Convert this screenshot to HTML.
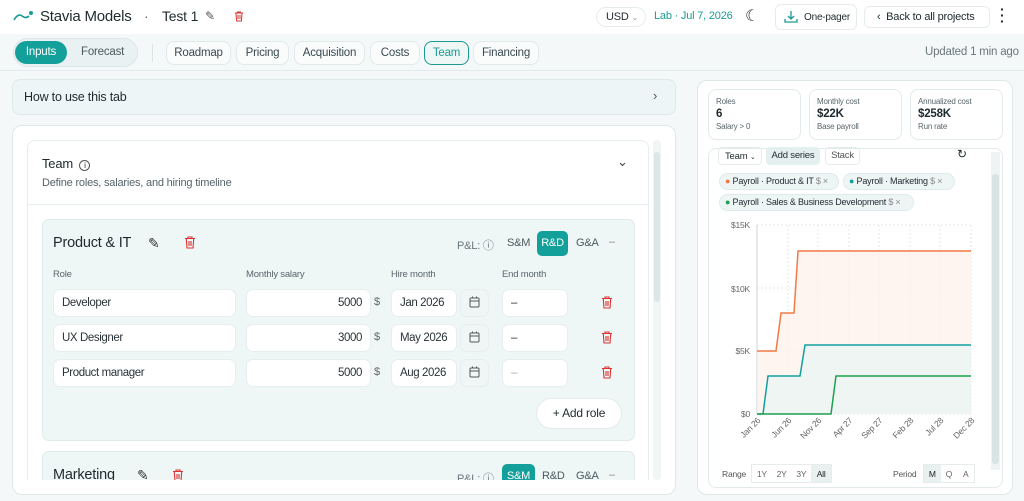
<!DOCTYPE html>
<html><head><meta charset="utf-8"><style>
*{box-sizing:border-box;margin:0;padding:0}
body{width:1024px;height:501px;overflow:hidden;background:#f4f8f8;font-family:"Liberation Sans",sans-serif;color:#1f2a2e;position:relative;font-size:12px;letter-spacing:-0.2px}
.a{position:absolute;white-space:nowrap}
.pill{position:absolute;border:1px solid #e1e9ea;border-radius:8px;background:#fafcfc;font-size:11.5px;color:#3a4a4f;display:flex;align-items:center;justify-content:center}
.inp{position:absolute;background:#fff;border:1px solid #e6eeef;border-radius:7px;height:28px;font-size:11.5px;display:flex;align-items:center;padding:0 8px;color:#2a3338;white-space:nowrap;letter-spacing:-0.4px}
.lbl{position:absolute;font-size:9.5px;color:#5a676b}
.card{position:absolute;background:#fff;border:1px solid #e3eaeb;border-radius:8px}
.tiny{font-size:8px;color:#5a676b}
</style></head><body>
<div class="a" style="left:0;top:0;width:1024px;height:34px;background:#fff"></div>
<svg class="a" style="left:13px;top:10px" width="22" height="12"><path d="M1 10 Q5 3 9 6 T16 6" stroke="#1a9a94" stroke-width="1.6" fill="none"/><circle cx="18" cy="3" r="2" fill="#1a9a94"/></svg>
<div class="a" style="left:40px;top:8px;font-size:15px;font-weight:500">Stavia Models</div>
<div class="a" style="left:144px;top:8px;font-size:14px;color:#666">·</div>
<div class="a" style="left:162px;top:8px;font-size:14px">Test 1</div>
<div class="a" style="left:205px;top:9px;font-size:12px;color:#555">✎</div>
<svg class="a" style="left:234px;top:11px" width="10" height="11"><path d="M1 2h8M3.5 2V1h3v1M2 2.5l.6 7.5h4.8L8 2.5M4 4v4M6 4v4" stroke="#d33" fill="none" stroke-width="1"/></svg>
<div class="a" style="left:596px;top:7px;width:50px;height:20px;border:1px solid #e6ecec;border-radius:10px;font-size:11px;padding:3px 0 0 9px">USD <span style="font-size:8px;color:#999">⌄</span></div>
<div class="a" style="left:654px;top:10px;font-size:11px;color:#1a9a94">Lab · Jul 7, 2026</div>
<div class="a" style="left:745px;top:6px;font-size:16px">☾</div>
<div class="a" style="left:775px;top:4px;width:82px;height:26px;border:1px solid #e6ecec;border-radius:6px;font-size:10px;padding:7px 0 0 28px">One-pager</div>
<svg class="a" style="left:784px;top:10px" width="14" height="14"><path d="M7 1v8M4 6l3 3 3-3M1 9v3h12V9" stroke="#1a9a94" fill="none" stroke-width="1.3"/></svg>
<div class="a" style="left:864px;top:6px;width:126px;height:22px;border:1px solid #e6ecec;border-radius:6px;font-size:11px;padding:4px 0 0 12px">‹ &nbsp;Back to all projects</div>
<div class="a" style="left:1000px;top:6px;font-size:14px;font-weight:bold;line-height:6px">·<br>·<br>·</div>
<div class="a" style="left:0;top:70px;width:1024px;height:1px;background:#e3eaeb"></div>
<div class="a" style="left:13px;top:38px;width:125px;height:29px;border-radius:15px;background:#eaf1f2;border:1px solid #dde7e8"></div>
<div class="a" style="left:15px;top:41px;width:52px;height:23px;border-radius:12px;background:#14a09a;color:#fff;font-size:11.5px;text-align:center;line-height:23px">Inputs</div>
<div class="a" style="left:81px;top:46px;font-size:11.5px;color:#4a5a5e">Forecast</div>
<div class="a" style="left:152px;top:44px;width:1px;height:18px;background:#dde4e5"></div>
<div class="pill" style="left:166px;top:41px;width:65px;height:24px">Roadmap</div>
<div class="pill" style="left:236px;top:41px;width:53px;height:24px">Pricing</div>
<div class="pill" style="left:294px;top:41px;width:71px;height:24px">Acquisition</div>
<div class="pill" style="left:370px;top:41px;width:50px;height:24px">Costs</div>
<div class="pill" style="left:424px;top:41px;width:45px;height:24px;border-color:#1a9a94;color:#1a9a94;background:#eef7f6">Team</div>
<div class="pill" style="left:473px;top:41px;width:66px;height:24px">Financing</div>
<div class="a" style="left:925px;top:46px;font-size:11.5px;color:#6a777b">Updated 1 min ago</div>
<div class="a" style="left:12px;top:79px;width:664px;height:36px;border:1px solid #dfe8e9;border-radius:8px;background:#eef5f6;font-size:12.5px;padding:10px 0 0 11px">How to use this tab</div>
<div class="a" style="left:653px;top:88px;font-size:13px;color:#555">›</div>
<div class="a" style="left:12px;top:125px;width:664px;height:370px;border:1px solid #dfe8e9;border-radius:10px;background:#fff;overflow:hidden">
 <div class="a" style="left:14px;top:14px;width:622px;height:360px;border:1px solid #e6eded;border-radius:8px"></div>
 <div class="a" style="left:29px;top:30px;font-size:13px;font-weight:500">Team <span style="border:1px solid #555;border-radius:50%;display:inline-block;width:11px;height:11px;font-size:8px;text-align:center;line-height:10px;margin-left:3px">i</span></div>
 <div class="a" style="left:29px;top:51px;font-size:11px;color:#55646a">Define roles, salaries, and hiring timeline</div>
 <div class="a" style="left:604px;top:28px;font-size:13px;color:#444">⌄</div>
 <div class="a" style="left:15px;top:78px;width:620px;height:1px;background:#e6eded"></div>
 <div class="a" style="left:29px;top:93px;width:593px;height:222px;background:#eef6f6;border:1px solid #e0ebeb;border-radius:7px"></div>
 <div class="a" style="left:29px;top:325px;width:593px;height:60px;background:#eef6f6;border:1px solid #e0ebeb;border-radius:7px"></div>
 <div class="a" style="left:640px;top:14px;width:8px;height:340px;background:#f2f5f5;border-radius:4px"></div>
 <div class="a" style="left:641px;top:26px;width:6px;height:150px;background:#dde6e7;border-radius:3px"></div>
</div>
<div class="a" style="left:53px;top:235px;font-size:14.5px;font-weight:500">Product &amp; IT</div>
<div class="a" style="left:148px;top:235px;font-size:14px;color:#333">✎</div>
<svg class="a" style="left:184px;top:236px" width="12" height="13"><path d="M1 2.5h10M4 2.5V1h4v1.5M2.3 3l.7 9h6l.7-9M5 5v5M7 5v5" stroke="#d33" fill="none" stroke-width="1.1"/></svg>
<div class="a" style="left:457px;top:237px;font-size:11px;color:#6a777b">P&amp;L: ⓘ</div>
<div class="a" style="left:507px;top:237px;font-size:11px;color:#4a5a5e">S&amp;M</div>
<div class="a" style="left:537px;top:231px;width:31px;height:25px;background:#14a09a;border-radius:5px;color:#fff;font-size:11px;text-align:center;line-height:25px">R&amp;D</div>
<div class="a" style="left:576px;top:237px;font-size:11px;color:#4a5a5e">G&amp;A</div>
<div class="a" style="left:609px;top:236px;font-size:11px;color:#888">–</div>
<div class="lbl" style="left:53px;top:269px">Role</div>
<div class="lbl" style="left:246px;top:269px">Monthly salary</div>
<div class="lbl" style="left:391px;top:269px">Hire month</div>
<div class="lbl" style="left:502px;top:269px">End month</div>
<div class="inp" style="left:53px;top:289px;width:183px">Developer</div>
<div class="inp" style="left:246px;top:289px;width:125px;justify-content:flex-end">5000</div>
<div class="a" style="left:374px;top:296px;font-size:11px;color:#666">$</div>
<div class="inp" style="left:391px;top:289px;width:66px">Jan 2026</div>
<div class="inp" style="left:460px;top:289px;width:29px;background:#f0f6f6"></div>
<div class="inp" style="left:502px;top:289px;width:66px">–</div>
<div class="inp" style="left:53px;top:324px;width:183px">UX Designer</div>
<div class="inp" style="left:246px;top:324px;width:125px;justify-content:flex-end">3000</div>
<div class="a" style="left:374px;top:331px;font-size:11px;color:#666">$</div>
<div class="inp" style="left:391px;top:324px;width:66px">May 2026</div>
<div class="inp" style="left:460px;top:324px;width:29px;background:#f0f6f6"></div>
<div class="inp" style="left:502px;top:324px;width:66px">–</div>
<div class="inp" style="left:53px;top:359px;width:183px">Product manager</div>
<div class="inp" style="left:246px;top:359px;width:125px;justify-content:flex-end">5000</div>
<div class="a" style="left:374px;top:366px;font-size:11px;color:#666">$</div>
<div class="inp" style="left:391px;top:359px;width:66px">Aug 2026</div>
<div class="inp" style="left:460px;top:359px;width:29px;background:#f0f6f6"></div>
<div class="inp" style="left:502px;top:359px;width:66px;color:#aaa">–</div>
<svg class="a" style="left:469px;top:296px" width="11" height="86"><g stroke="#555" fill="none" stroke-width="1"><rect x="1" y="2" width="9" height="9" rx="1"/><path d="M1 5h9M3.5 0.5v2M7.5 0.5v2"/><rect x="1" y="37" width="9" height="9" rx="1"/><path d="M1 40h9M3.5 35.5v2M7.5 35.5v2"/><rect x="1" y="72" width="9" height="9" rx="1"/><path d="M1 75h9M3.5 70.5v2M7.5 70.5v2"/></g></svg>
<svg class="a" style="left:601px;top:296px" width="12" height="86"><g stroke="#d33" fill="none" stroke-width="1.1"><path d="M1 2.5h10M4 2.5V1h4v1.5M2.3 3l.7 9h6l.7-9M5 5v5M7 5v5"/><path transform="translate(0,35)" d="M1 2.5h10M4 2.5V1h4v1.5M2.3 3l.7 9h6l.7-9M5 5v5M7 5v5"/><path transform="translate(0,70)" d="M1 2.5h10M4 2.5V1h4v1.5M2.3 3l.7 9h6l.7-9M5 5v5M7 5v5"/></g></svg>
<div class="a" style="left:536px;top:398px;width:86px;height:31px;background:#fff;border:1px solid #e3ebeb;border-radius:16px;font-size:12px;text-align:center;line-height:29px">+ Add role</div>
<div class="a" style="left:53px;top:467px;font-size:14.5px;font-weight:500">Marketing</div>
<div class="a" style="left:137px;top:467px;font-size:14px;color:#333">✎</div>
<svg class="a" style="left:172px;top:469px" width="12" height="13"><path d="M1 2.5h10M4 2.5V1h4v1.5M2.3 3l.7 9h6l.7-9M5 5v5M7 5v5" stroke="#d33" fill="none" stroke-width="1.1"/></svg>
<div class="a" style="left:457px;top:470px;font-size:11px;color:#6a777b">P&amp;L: ⓘ</div>
<div class="a" style="left:502px;top:464px;width:33px;height:22px;background:#14a09a;border-radius:5px 5px 0 0;color:#fff;font-size:11px;text-align:center;line-height:24px">S&amp;M</div>
<div class="a" style="left:542px;top:470px;font-size:11px;color:#4a5a5e">R&amp;D</div>
<div class="a" style="left:576px;top:470px;font-size:11px;color:#4a5a5e">G&amp;A</div>
<div class="a" style="left:609px;top:469px;font-size:11px;color:#888">–</div>
<div class="a" style="left:12px;top:481px;width:664px;height:20px;background:#f4f8f8"></div>
<div class="a" style="left:12px;top:480px;width:664px;height:15px;border:1px solid #dfe8e9;border-top:none;border-radius:0 0 10px 10px;background:#fff"></div>

<div class="a" style="left:697px;top:80px;width:316px;height:415px;background:#fff;border:1px solid #dfe8e9;border-radius:10px"></div>
<div class="card" style="left:708px;top:89px;width:93px;height:51px;padding:7px 0 0 7px"><div class="tiny">Roles</div><div style="font-size:11.5px;font-weight:bold;margin:2px 0">6</div><div class="tiny">Salary &gt; 0</div></div>
<div class="card" style="left:809px;top:89px;width:93px;height:51px;padding:7px 0 0 7px"><div class="tiny">Monthly cost</div><div style="font-size:11.5px;font-weight:bold;margin:2px 0">$22K</div><div class="tiny">Base payroll</div></div>
<div class="card" style="left:910px;top:89px;width:93px;height:51px;padding:7px 0 0 7px"><div class="tiny">Annualized cost</div><div style="font-size:11.5px;font-weight:bold;margin:2px 0">$258K</div><div class="tiny">Run rate</div></div>
<div class="a" style="left:708px;top:148px;width:295px;height:340px;border:1px solid #e3eaeb;border-radius:8px"></div>
<div class="a" style="left:991px;top:152px;width:9px;height:318px;background:#eef3f3"></div>
<div class="a" style="left:992px;top:174px;width:7px;height:290px;background:#d8e3e4;border-radius:3px"></div>
<div class="a" style="left:718px;top:147px;width:44px;height:18px;border:1px solid #e6ecec;border-radius:4px;font-size:9.5px;padding:3px 0 0 6px">Team <span style="font-size:7px">⌄</span></div>
<div class="a" style="left:766px;top:147px;width:54px;height:18px;background:#e6efef;border-radius:4px;font-size:9.5px;text-align:center;line-height:17px">Add series</div>
<div class="a" style="left:825px;top:147px;width:35px;height:18px;border:1px solid #e6ecec;border-radius:4px;font-size:9.5px;text-align:center;line-height:16px;color:#555">Stack</div>
<div class="a" style="left:957px;top:147px;font-size:12px">↻</div>
<div class="a" style="left:719px;top:173px;width:120px;height:17px;background:#eef5f5;border:1px solid #e0eaea;border-radius:9px;font-size:9px;padding:2px 0 0 5px"><span style="color:#f07a45">●</span> Payroll · Product &amp; IT <span style="color:#888">$ ×</span></div>
<div class="a" style="left:843px;top:173px;width:112px;height:17px;background:#eef5f5;border:1px solid #e0eaea;border-radius:9px;font-size:9px;padding:2px 0 0 5px"><span style="color:#12a0a0">●</span> Payroll · Marketing <span style="color:#888">$ ×</span></div>
<div class="a" style="left:719px;top:194px;width:195px;height:17px;background:#eef5f5;border:1px solid #e0eaea;border-radius:9px;font-size:9px;padding:2px 0 0 5px"><span style="color:#1fa050">●</span> Payroll · Sales &amp; Business Development <span style="color:#888">$ ×</span></div>
<svg class="a" style="left:708px;top:215px" width="285" height="245">
<g font-family="Liberation Sans" font-size="8.5" fill="#666" text-anchor="end"><text x="42" y="13">$15K</text><text x="42" y="77">$10K</text><text x="42" y="139">$5K</text><text x="42" y="202">$0</text></g>
<g stroke="#e4e9ea" stroke-dasharray="2,2"><line x1="49" y1="10" x2="263" y2="10"/><line x1="49" y1="73" x2="263" y2="73"/><line x1="49" y1="136" x2="263" y2="136"/><line x1="49" y1="199" x2="263" y2="199"/>
<line x1="80" y1="10" x2="80" y2="199"/><line x1="110" y1="10" x2="110" y2="199"/><line x1="141" y1="10" x2="141" y2="199"/><line x1="171" y1="10" x2="171" y2="199"/><line x1="202" y1="10" x2="202" y2="199"/><line x1="232" y1="10" x2="232" y2="199"/><line x1="263" y1="10" x2="263" y2="199"/></g>
<line x1="49" y1="10" x2="49" y2="199" stroke="#c8d4d6"/>
<path d="M49 136H68L73 98H86L90 36H263V199H49Z" fill="#fdf1ea" opacity=".7"/>
<path d="M55 199L60 161H92L97 130H263V199Z" fill="#eef5f3"/>
<path d="M49 136H68L73 98H86L90 36H263" stroke="#f07a45" stroke-width="1.5" fill="none"/>
<path d="M49 199H55L60 161H92L97 130H263" stroke="#12a0a0" stroke-width="1.5" fill="none"/>
<path d="M49 199H123L128 161H263" stroke="#1fa050" stroke-width="1.5" fill="none"/>
<g font-family="Liberation Sans" font-size="8.5" fill="#666" text-anchor="end">
<text transform="translate(53,206) rotate(-45)">Jan 26</text><text transform="translate(84,206) rotate(-45)">Jun 26</text><text transform="translate(114,206) rotate(-45)">Nov 26</text><text transform="translate(145,206) rotate(-45)">Apr 27</text><text transform="translate(175,206) rotate(-45)">Sep 27</text><text transform="translate(206,206) rotate(-45)">Feb 28</text><text transform="translate(236,206) rotate(-45)">Jul 28</text><text transform="translate(267,206) rotate(-45)">Dec 28</text></g>
</svg>
<div class="a" style="left:722px;top:469px;font-size:8.5px;color:#555">Range</div>
<div class="a" style="left:751px;top:464px;width:81px;height:19px;border:1px solid #e6ecec;font-size:8.5px;color:#666;display:flex"><span style="width:20px;text-align:center;line-height:18px">1Y</span><span style="width:20px;text-align:center;line-height:18px">2Y</span><span style="width:20px;text-align:center;line-height:18px">3Y</span><span style="width:20px;text-align:center;line-height:18px;background:#e8f0f0;color:#222">All</span></div>
<div class="a" style="left:893px;top:469px;font-size:8.5px;color:#555">Period</div>
<div class="a" style="left:923px;top:464px;width:52px;height:19px;border:1px solid #e6ecec;font-size:8.5px;color:#666;display:flex"><span style="width:17px;text-align:center;line-height:18px;background:#e8f0f0;color:#222">M</span><span style="width:17px;text-align:center;line-height:18px">Q</span><span style="width:17px;text-align:center;line-height:18px">A</span></div>
</body></html>
